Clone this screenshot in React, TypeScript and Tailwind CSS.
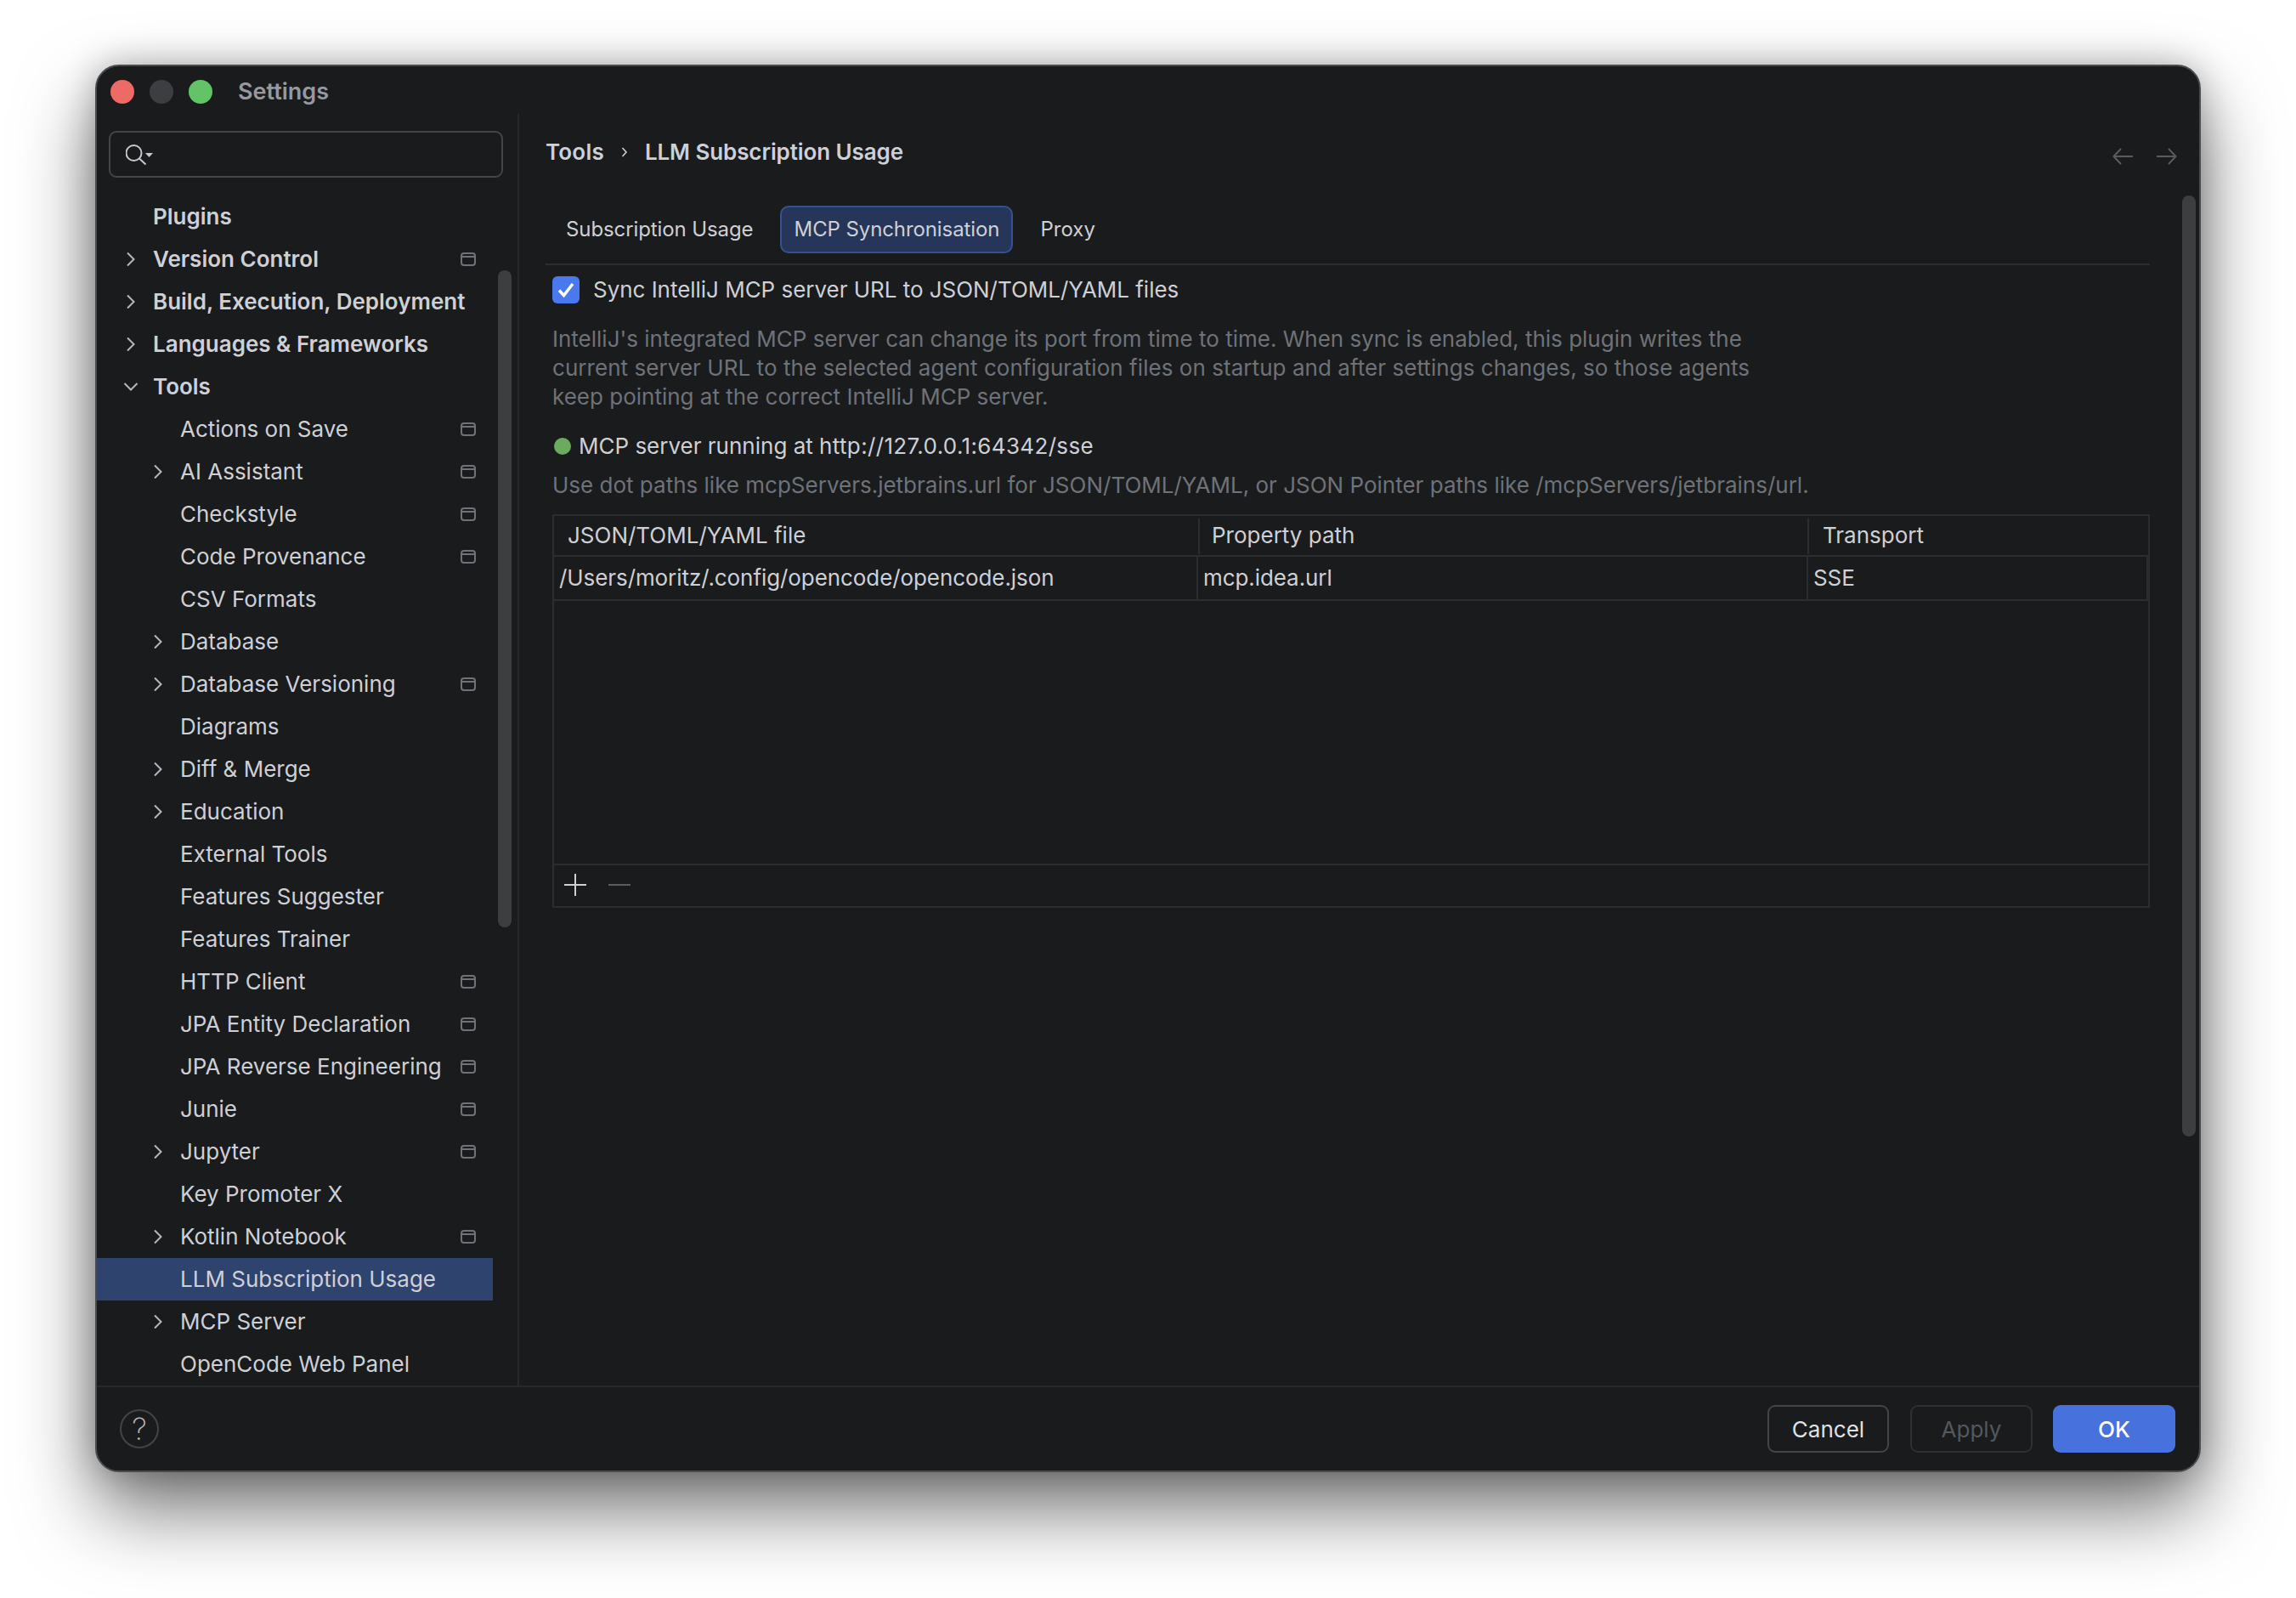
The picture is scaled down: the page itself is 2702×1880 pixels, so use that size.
import React from "react";

type TreeRow = {
  label: string;
  level: 0 | 1;
  arrow?: "right" | "down";
  badge?: boolean;
  selected?: boolean;
};

// --- Settings tree data ---
const rows: TreeRow[] = [
  { label: "Plugins", level: 0 },
  { label: "Version Control", level: 0, arrow: "right", badge: true },
  { label: "Build, Execution, Deployment", level: 0, arrow: "right" },
  { label: "Languages & Frameworks", level: 0, arrow: "right" },
  { label: "Tools", level: 0, arrow: "down" },
  { label: "Actions on Save", level: 1, badge: true },
  { label: "AI Assistant", level: 1, arrow: "right", badge: true },
  { label: "Checkstyle", level: 1, badge: true },
  { label: "Code Provenance", level: 1, badge: true },
  { label: "CSV Formats", level: 1 },
  { label: "Database", level: 1, arrow: "right" },
  { label: "Database Versioning", level: 1, arrow: "right", badge: true },
  { label: "Diagrams", level: 1 },
  { label: "Diff & Merge", level: 1, arrow: "right" },
  { label: "Education", level: 1, arrow: "right" },
  { label: "External Tools", level: 1 },
  { label: "Features Suggester", level: 1 },
  { label: "Features Trainer", level: 1 },
  { label: "HTTP Client", level: 1, badge: true },
  { label: "JPA Entity Declaration", level: 1, badge: true },
  { label: "JPA Reverse Engineering", level: 1, badge: true },
  { label: "Junie", level: 1, badge: true },
  { label: "Jupyter", level: 1, arrow: "right", badge: true },
  { label: "Key Promoter X", level: 1 },
  { label: "Kotlin Notebook", level: 1, arrow: "right", badge: true },
  { label: "LLM Subscription Usage", level: 1, selected: true },
  { label: "MCP Server", level: 1, arrow: "right" },
  { label: "OpenCode Web Panel", level: 1 },
];

const Chevron = ({ dir }: { dir: "right" | "down" }) =>
  dir === "right" ? (
    <svg width="12" height="18" viewBox="0 0 12 18" fill="none" stroke="#b4b8bf" strokeWidth="2">
      <path d="M2 1.5 L9.5 9 L2 16.5" />
    </svg>
  ) : (
    <svg width="18" height="12" viewBox="0 0 18 12" fill="none" stroke="#b4b8bf" strokeWidth="2">
      <path d="M1.5 2 L9 9.5 L16.5 2" />
    </svg>
  );

const ProjectBadge = () => (
  <svg width="18" height="16" viewBox="0 0 18 16" fill="none" stroke="#6f7278" strokeWidth="2">
    <rect x="1" y="1" width="16" height="14" rx="3" />
    <path d="M1 5 H17" />
  </svg>
);

function Row({ row }: { row: TreeRow }) {
  const indentArrow = row.level === 0 ? "w-[66px] pl-[34px]" : "w-[98px] pl-[66px]";
  return (
    <div className={`flex h-[50px] items-center ${row.selected ? "bg-[#2e436e]" : ""}`}>
      <div className={`flex shrink-0 items-center ${indentArrow}`}>
        {row.arrow === "right" && <Chevron dir="right" />}
        {row.arrow === "down" && (
          <span className="-ml-[3px] flex">
            <Chevron dir="down" />
          </span>
        )}
      </div>
      <span className={`whitespace-nowrap text-[#ced0d6] ${row.level === 0 ? "font-semibold" : ""}`}>{row.label}</span>
      {row.badge && (
        <span className="mr-[20px] ml-auto flex">
          <ProjectBadge />
        </span>
      )}
    </div>
  );
}

export default function App() {
  return (
    <div className="h-[1880px] w-[2702px] overflow-hidden bg-white pt-[76px] pl-[112px] font-['Inter',sans-serif] text-[26px] leading-[34px]">
      {/* Window */}
      <div className="relative flex h-[1656px] w-[2478px] flex-col overflow-hidden rounded-[28px] border-2 border-[#4a4b4d] bg-[#1a1b1d] shadow-[0_44px_90px_rgba(0,0,0,0.55),0_0_40px_rgba(0,0,0,0.25)]">
        {/* Title bar */}
        <div className="flex h-[56px] shrink-0 items-center pt-[4px] pl-[16px]">
          <span className="h-[28px] w-[28px] rounded-full bg-[#ee6a67]" />
          <span className="ml-[18px] h-[28px] w-[28px] rounded-full bg-[#3d3e41]" />
          <span className="ml-[18px] h-[28px] w-[28px] rounded-full bg-[#62c467]" />
          <span className="ml-[30px] text-[27px] font-semibold text-[#97999e]">Settings</span>
        </div>

        <div className="flex min-h-0 flex-1">
          {/* Sidebar */}
          <div className="relative w-[497px] shrink-0 border-r-2 border-[#26282b]">
            <div className="pt-[20px] pb-[21px] pl-[14px]">
              <div className="flex h-[55px] w-[464px] items-center rounded-[9px] border-2 border-[#43454a] pl-[18px]">
                <svg width="34" height="28" viewBox="0 0 34 28" fill="none">
                  <circle cx="9.5" cy="12" r="9" stroke="#c6c8ce" strokeWidth="2" />
                  <path d="M16 18.5 L23.5 25.5" stroke="#c6c8ce" strokeWidth="2" />
                  <path d="M23 12 H32 L27.5 17 Z" fill="#c6c8ce" />
                </svg>
              </div>
            </div>
            <div className="w-[466px]">
              {rows.map((row) => (
                <Row key={row.label} row={row} />
              ))}
            </div>
            {/* Sidebar scrollbar */}
            <div className="absolute top-[184px] left-[472px] h-[773px] w-[16px] rounded-full bg-[#3d3e40]" />
          </div>

          {/* Content */}
          <div className="relative min-w-0 flex-1 pt-[20px] pl-[31px]">
            <div className="w-[1888px]">
              {/* Breadcrumb */}
              <div className="flex h-[50px] items-center font-semibold text-[#ced0d6]">
                <span className="tracking-[0.2px]">Tools</span>
                <svg className="mx-[20px]" width="8" height="14" viewBox="0 0 8 14" fill="none" stroke="#ced0d6" strokeWidth="1.6">
                  <path d="M1.5 2 L6 7 L1.5 12" />
                </svg>
                <span className="tracking-[-0.1px]">LLM Subscription Usage</span>
              </div>

              {/* Tabs */}
              <div className="mt-[38px] flex h-[70px] items-start border-b-2 border-[#2b2d30] text-[24px] text-[#ced0d6]">
                <span className="mt-[11px] ml-[24px] tracking-[-0.1px]">Subscription Usage</span>
                <span className="ml-[32px] flex h-[56px] w-[274px] items-center justify-center rounded-[10px] border-2 border-[#35538f] bg-[#26355a] tracking-[-0.1px]">
                  MCP Synchronisation
                </span>
                <span className="mt-[11px] ml-[32px]">Proxy</span>
              </div>

              {/* Sync checkbox */}
              <div className="mt-[12px] ml-[8px] flex h-[34px] items-center text-[#ced0d6]">
                <span className="flex h-[32px] w-[32px] items-center justify-center rounded-[6px] bg-[#4a78ee]">
                  <svg width="22" height="20" viewBox="0 0 22 20" fill="none" stroke="#fff" strokeWidth="3.4">
                    <path d="M3 10.5 L8.5 16.5 L19 3" />
                  </svg>
                </span>
                <span className="ml-[16px] tracking-[-0.03px]">Sync IntelliJ MCP server URL to JSON/TOML/YAML files</span>
              </div>

              {/* Description */}
              <div className="mt-[24px] ml-[8px] whitespace-nowrap text-[#6f7278]">
                <div>IntelliJ's integrated MCP server can change its port from time to time. When sync is enabled, this plugin writes the</div>
                <div className="tracking-[0.05px]">current server URL to the selected agent configuration files on startup and after settings changes, so those agents</div>
                <div>keep pointing at the correct IntelliJ MCP server.</div>
              </div>

              {/* Status */}
              <div className="mt-[24px] ml-[10px] flex items-center text-[#ced0d6]">
                <span className="h-[20px] w-[20px] rounded-full bg-[#6aab5e]" />
                <span className="ml-[9px] whitespace-pre">MCP server running at </span>
                <span className="tracking-[0.35px]">http://127.0.0.1:64342/sse</span>
              </div>
              <div className="mt-[12px] ml-[8px] whitespace-nowrap text-[#6f7278]">
                Use dot paths like mcpServers.jetbrains.url for JSON/TOML/YAML, or JSON Pointer paths like /mcpServers/jetbrains/url.
              </div>

              {/* Table */}
              <div className="mt-[17px] ml-[8px] flex h-[463px] flex-col border-2 border-[#2b2d30] text-[#ced0d6]">
                <div className="flex h-[48px] shrink-0 border-b-2 border-[#2b2d30]">
                  <div className="flex w-[760px] items-center pl-[16px]">
                    <span>JSON/TOML/YAML file</span>
                    <span className="mt-[2px] ml-auto h-[42px] w-[2px] bg-[#2b2d30]" />
                  </div>
                  <div className="flex w-[717px] items-center pl-[14px]">
                    <span>Property path</span>
                    <span className="mt-[2px] ml-auto h-[42px] w-[2px] bg-[#2b2d30]" />
                  </div>
                  <div className="flex items-center pl-[16px]">Transport</div>
                </div>
                <div className="flex h-[52px] shrink-0 border-b-2 border-[#2b2d30] tracking-[-0.08px]">
                  <div className="flex w-[758px] items-center border-r-2 border-[#2b2d30] pl-[6px]">/Users/moritz/.config/opencode/opencode.json</div>
                  <div className="flex w-[718px] items-center border-r-2 border-[#2b2d30] pl-[6px]">mcp.idea.url</div>
                  <div className="flex flex-1 items-center border-r-2 border-[#2b2d30] pl-[6px]">SSE</div>
                </div>
                <div className="flex-1" />
                <div className="flex h-[50px] shrink-0 items-center gap-[26px] border-t-2 border-[#2b2d30] pb-[2px] pl-[12px]">
                  <svg width="26" height="26" viewBox="0 0 26 26" stroke="#ced0d6" strokeWidth="2">
                    <path d="M0 13 H26 M13 0 V26" />
                  </svg>
                  <svg width="26" height="26" viewBox="0 0 26 26" stroke="#5a5d63" strokeWidth="2">
                    <path d="M0 13 H26" />
                  </svg>
                </div>
              </div>
            </div>

            {/* Back / forward */}
            <div className="absolute top-[40px] right-[26px] flex gap-[28px]">
              <svg width="24" height="20" viewBox="0 0 24 20" fill="none" stroke="#5a5c60" strokeWidth="2">
                <path d="M24 10 H1.5 M10 1 L1.5 10 L10 19" />
              </svg>
              <svg width="24" height="20" viewBox="0 0 24 20" fill="none" stroke="#5a5c60" strokeWidth="2">
                <path d="M0 10 H22.5 M14 1 L22.5 10 L14 19" />
              </svg>
            </div>
            {/* Content scrollbar */}
            <div className="absolute top-[96px] right-[4px] h-[1107px] w-[16px] rounded-full bg-[#3d3e40]" />
          </div>
        </div>

        {/* Footer */}
        <div className="flex h-[100px] shrink-0 items-center border-t-2 border-[#26282b] pr-[28px] pl-[27px]">
          <span className="flex h-[46px] w-[46px] items-center justify-center rounded-full border-2 border-[#43454a] text-[36px] font-extralight text-[#b4b8bf]">?</span>
          <button className="ml-auto h-[56px] w-[143px] rounded-[9px] border-2 border-[#43454a] pt-[2px] text-[#dfe1e5]">Cancel</button>
          <button className="ml-[25px] h-[56px] w-[144px] rounded-[9px] border-2 border-[#2e3034] pt-[2px] text-[#55575c]">Apply</button>
          <button className="ml-[24px] h-[56px] w-[144px] rounded-[9px] bg-[#4772de] pt-[2px] font-medium text-white">OK</button>
        </div>
      </div>
    </div>
  );
}
